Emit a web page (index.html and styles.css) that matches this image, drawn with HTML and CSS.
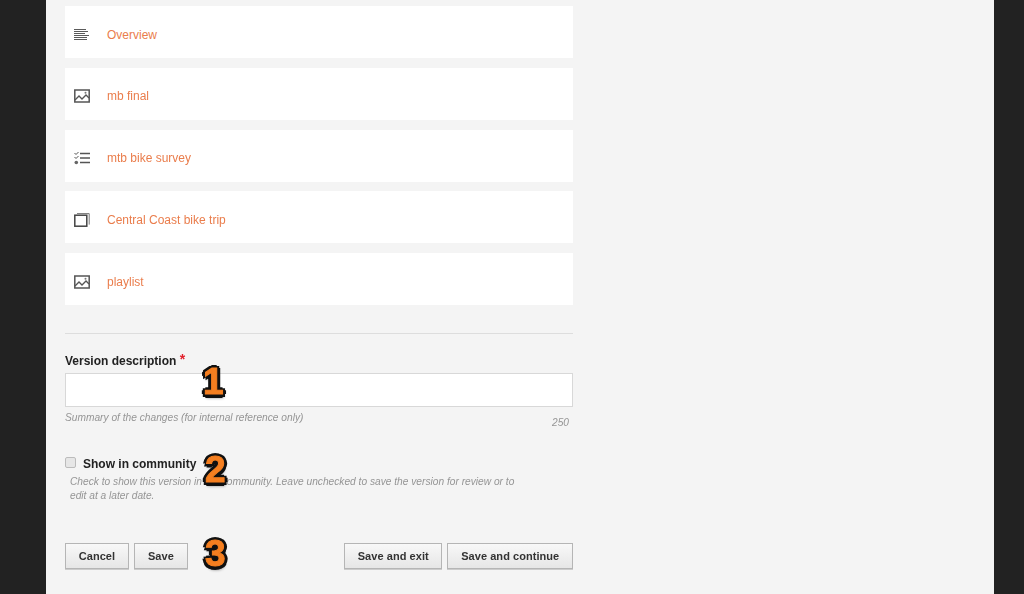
FILE: index.html
```html
<!DOCTYPE html>
<html lang="en">

<head>
    <meta charset="UTF-8">
    <meta name="viewport" content="width=device-width, initial-scale=1.0">
    <title>Publish version</title>
    <link rel="stylesheet" href="styles.css">
</head>

<body>
    <div class="page">
        <div class="content">
            <ul class="items">
                <li class="item">
                    <svg class="icon" viewBox="0 0 16 14"><path d="M0 1.5h12M0 3.5h14M0 5.5h11M0 7.5h15M0 9.5h13M0 11.5h13" fill="none" stroke="#5a5a5a" stroke-width="1"/></svg>
                    <a href="#">Overview</a>
                </li>
                <li class="item">
                    <svg class="icon" viewBox="0 0 16 14"><rect x="0.8" y="1" width="14.4" height="12" fill="none" stroke="#555" stroke-width="1.5"/><path d="M1 11l4-4 3 3 4-4 3 3" fill="none" stroke="#555" stroke-width="1.3"/><circle cx="11.5" cy="3.8" r="1" fill="#777"/></svg>
                    <a href="#">mb final</a>
                </li>
                <li class="item">
                    <svg class="icon" viewBox="0 0 16 14"><path d="M6 2.5h10M6 7h10M6 11.5h10" fill="none" stroke="#555" stroke-width="1.3"/><path d="M0.5 2l1.5 1.5 2.5-2.5M0.5 6l1.5 1.5 2.5-2.5" fill="none" stroke="#555" stroke-width="1"/><circle cx="2.3" cy="11.5" r="1.8" fill="#666"/></svg>
                    <a href="#">mtb bike survey</a>
                </li>
                <li class="item">
                    <svg class="icon" viewBox="0 0 16 14"><rect x="0.8" y="2.2" width="12" height="11" fill="none" stroke="#444" stroke-width="1.5"/><path d="M3 0.6h12.2v11" fill="none" stroke="#777" stroke-width="1"/></svg>
                    <a href="#">Central Coast bike trip</a>
                </li>
                <li class="item">
                    <svg class="icon" viewBox="0 0 16 14"><rect x="0.8" y="1" width="14.4" height="12" fill="none" stroke="#555" stroke-width="1.5"/><path d="M1 11l4-4 3 3 4-4 3 3" fill="none" stroke="#555" stroke-width="1.3"/><circle cx="11.5" cy="3.8" r="1" fill="#777"/></svg>
                    <a href="#">playlist</a>
                </li>
            </ul>

            <hr class="divider">

            <form class="form">
                <label class="field-label" for="versionDescription">Version description <span class="required">*</span></label>
                <input type="text" id="versionDescription" class="text-input">
                <div class="field-notes">
                    <span class="hint">Summary of the changes (for internal reference only)</span>
                    <span class="hint count">250</span>
                </div>

                <div class="check-row">
                    <input type="checkbox" id="showInCommunity" class="checkbox">
                    <label class="check-label" for="showInCommunity">Show in community</label>
                </div>
                <p class="hint check-help">Check to show this version in the community. Leave unchecked to save the version for review or to edit at a later date.</p>

                <div class="actions">
                    <div class="actions-group">
                        <button type="button">Cancel</button>
                        <button type="button">Save</button>
                    </div>
                    <div class="actions-group">
                        <button type="button">Save and exit</button>
                        <button type="button">Save and continue</button>
                    </div>
                </div>
            </form>

            <!-- numbered callouts drawn over the form -->
            <span class="callout callout-1">1</span>
            <span class="callout callout-2">2</span>
            <span class="callout callout-3">3</span>
        </div>
    </div>
</body>

</html>
```

FILE: styles.css
```css
html,
body {
    margin: 0;
    height: 100%;
    overflow: hidden;
}

body {
    background-color: #222;
    font-family: "Liberation Sans", Arial, sans-serif;
    font-size: 12px;
    color: #222;
}

.page {
    margin: 0 30px 0 46px;
    height: 594px;
    background-color: #f4f4f4;
}

.content {
    position: relative;
    width: 508px;
    margin-left: 19px;
    padding-top: 6px;
    filter: blur(0.3px);
}

.items {
    list-style: none;
    margin: 0;
    padding: 0;
}

.item {
    display: flex;
    align-items: center;
    box-sizing: border-box;
    height: 52px;
    margin-bottom: 9.75px;
    padding: 5px 0 0 9px;
    background-color: #fff;
}

.icon {
    width: 16px;
    height: 14px;
    margin-right: 17px;
}

.item a {
    color: #ea7d4c;
    text-decoration: none;
}

.divider {
    height: 1px;
    margin: 28px 0 0;
    border: none;
    background-color: #ddd;
}

.form {
    padding-top: 20px;
}

.field-label {
    display: block;
    height: 19px;
    font-weight: bold;
}

.required {
    position: relative;
    top: -1px;
    font-size: 14px;
    line-height: 0;
    color: #e2202c;
}

.text-input {
    display: block;
    box-sizing: border-box;
    width: 100%;
    height: 34px;
    margin: 0;
    border: 1px solid #d8d8d8;
    background-color: #fff;
}

.field-notes {
    display: flex;
    justify-content: space-between;
    padding: 5px 4px 0 0;
}

.hint {
    font-size: 10.2px;
    font-style: italic;
    color: #959595;
}

.count {
    padding-top: 5px;
}

.check-row {
    display: flex;
    align-items: center;
    margin-top: 29px;
}

.checkbox {
    appearance: none;
    box-sizing: border-box;
    width: 11px;
    height: 11px;
    margin: -3px 7px 0 0;
    border: 1px solid #bbb;
    border-radius: 2px;
    background-color: #e6e6e6;
}

.check-label {
    font-weight: bold;
}

.check-help {
    width: 450px;
    margin: 4px 0 0 5px;
    line-height: 14px;
}

.actions {
    display: flex;
    justify-content: space-between;
    margin-top: 40px;
}

.actions-group {
    display: flex;
    gap: 5px;
}

button {
    min-width: 54px;
    height: 26px;
    padding: 0 12.75px;
    border: 1px solid #b5b5b5;
    background: linear-gradient(#f8f8f8, #e6e6e6);
    box-shadow: 0 1px 0 #ccc;
    font-family: "Liberation Sans", Arial, sans-serif;
    font-size: 11px;
    font-weight: bold;
    letter-spacing: 0.05px;
    color: #333;
    cursor: pointer;
}

.callout {
    position: absolute;
    font-size: 37px;
    font-weight: bold;
    line-height: 40px;
    color: #f57f20;
    -webkit-text-stroke: 1px #f57f20;
    text-shadow:
        3.5px 0 0 #111, -3.5px 0 0 #111, 0 3.5px 0 #111, 0 -3.5px 0 #111,
        2.5px 2.5px 0 #111, -2.5px 2.5px 0 #111, 2.5px -2.5px 0 #111, -2.5px -2.5px 0 #111,
        1px 4px 3px rgba(0, 0, 0, 0.45);
}

.callout-1 {
    left: 138px;
    top: 362px;
}

.callout-2 {
    left: 140px;
    top: 450px;
}

.callout-3 {
    left: 140px;
    top: 534px;
}
```
